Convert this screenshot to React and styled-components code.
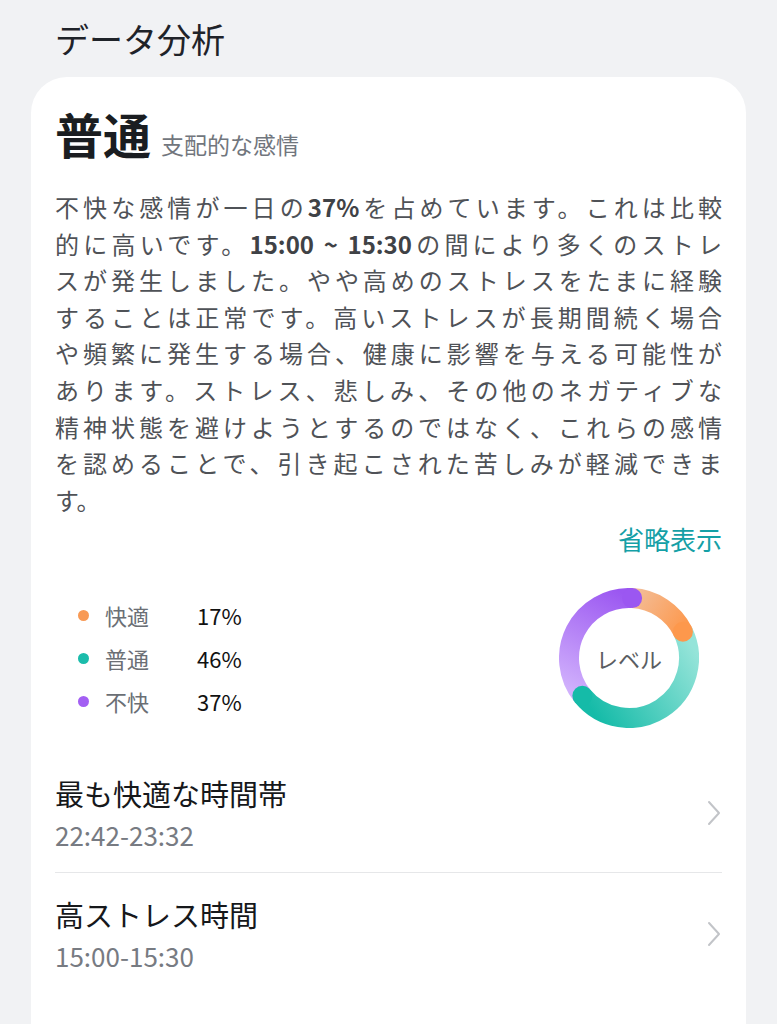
import React from "react";
import styled, { createGlobalStyle } from "styled-components";

const GlobalStyle = createGlobalStyle`
  * { box-sizing: border-box; }
  body {
    margin: 0;
    background: #f1f2f4;
    font-family: "Noto Sans CJK JP", "Noto Sans", sans-serif;
  }
`;

const lines = [
  <>不快な感情が一日の<b>37%</b>を占めています。これは比較</>,
  <>的に高いです。<b>15:00 ~ 15:30</b>の間により多くのストレ</>,
  <>スが発生しました。やや高めのストレスをたまに経験</>,
  <>することは正常です。高いストレスが長期間続く場合</>,
  <>や頻繁に発生する場合、健康に影響を与える可能性が</>,
  <>あります。ストレス、悲しみ、その他のネガティブな</>,
  <>精神状態を避けようとするのではなく、これらの感情</>,
  <>を認めることで、引き起こされた苦しみが軽減できま</>,
  <>す。</>,
];

const legend = [
  { label: "快適", value: "17%", color: "#f89a55" },
  { label: "普通", value: "46%", color: "#1bbcab" },
  { label: "不快", value: "37%", color: "#a35ff3" },
];

const segments = [
  { id: "o", from: 3, to: 64, light: "#f3bd97", dark: "#fd984c" },
  { id: "t", from: 64, to: 231, light: "#95e4d9", dark: "#15bba8" },
  { id: "p", from: 231, to: 363, light: "#d0b0fc", dark: "#9b57f1" },
];

const SIZE = 140;
const R = 60;
const C = SIZE / 2;

const pt = (deg) => {
  const a = (deg * Math.PI) / 180;
  return [C + R * Math.sin(a), C - R * Math.cos(a)];
};

const Donut = () => (
  <DonutBox>
    <svg width={SIZE} height={SIZE} viewBox={`0 0 ${SIZE} ${SIZE}`}>
      <defs>
        {segments.map((s) => {
          const [x1, y1] = pt(s.from);
          const [x2, y2] = pt(s.to);
          return (
            <linearGradient
              key={s.id}
              id={`g-${s.id}`}
              gradientUnits="userSpaceOnUse"
              x1={x1}
              y1={y1}
              x2={x2}
              y2={y2}
            >
              <stop offset="0" stopColor={s.light} />
              <stop offset="1" stopColor={s.dark} />
            </linearGradient>
          );
        })}
      </defs>
      {segments.map((s) => {
        const [x1, y1] = pt(s.from);
        const [x2, y2] = pt(s.to);
        const large = s.to - s.from > 180 ? 1 : 0;
        return (
          <path
            key={s.id}
            d={`M ${x1} ${y1} A ${R} ${R} 0 ${large} 1 ${x2} ${y2}`}
            fill="none"
            stroke={`url(#g-${s.id})`}
            strokeWidth="20"
          />
        );
      })}
      {segments.map((s) => {
        const [x2, y2] = pt(s.to);
        return <circle key={s.id} cx={x2} cy={y2} r="10" fill={s.dark} />;
      })}
    </svg>
    <DonutLabel>レベル</DonutLabel>
  </DonutBox>
);

const Chevron = () => (
  <svg width="16" height="28" viewBox="0 0 16 28">
    <path
      d="M3 3 L13 14 L3 25"
      fill="none"
      stroke="#c2c4c8"
      strokeWidth="2"
      strokeLinecap="round"
      strokeLinejoin="round"
    />
  </svg>
);

export default function App() {
  return (
    <>
      <GlobalStyle />
      <Page>
        <Heading>データ分析</Heading>
        <Card>
          <TitleRow>
            <Mood>普通</Mood>
            <MoodCaption>支配的な感情</MoodCaption>
          </TitleRow>
          <Paragraph>
            {lines.map((l, i) => (
              <Line key={i} $last={i === lines.length - 1}>
                {l}
              </Line>
            ))}
          </Paragraph>
          <Collapse>省略表示</Collapse>
          <Stats>
            <Legend>
              {legend.map((it) => (
                <LegendItem key={it.label}>
                  <Dot $color={it.color} />
                  <LegendLabel>{it.label}</LegendLabel>
                  <LegendValue>{it.value}</LegendValue>
                </LegendItem>
              ))}
            </Legend>
            <Donut />
          </Stats>
          <Rows>
            <Row>
              <RowText>
                <RowTitle>最も快適な時間帯</RowTitle>
                <RowValue>22:42-23:32</RowValue>
              </RowText>
              <Chevron />
            </Row>
            <Row>
              <RowText>
                <RowTitle>高ストレス時間</RowTitle>
                <RowValue>15:00-15:30</RowValue>
              </RowText>
              <Chevron />
            </Row>
          </Rows>
        </Card>
      </Page>
    </>
  );
}

const Page = styled.main`
  min-height: 1024px;
  padding: 0 31px;
  display: flex;
  flex-direction: column;
`;

const Heading = styled.h1`
  margin: 0;
  padding: 16px 24px 0;
  font-size: 34px;
  line-height: 46px;
  font-weight: 400;
  color: #1f2329;
`;

const Card = styled.section`
  flex: 1;
  margin-top: 15px;
  background: #fff;
  border-radius: 36px 36px 0 0;
  padding: 26px 24px 40px;
`;

const TitleRow = styled.div`
  display: flex;
  align-items: baseline;
`;

const Mood = styled.span`
  font-size: 48px;
  line-height: 60px;
  font-weight: 700;
  color: #1a1d21;
`;

const MoodCaption = styled.span`
  margin-left: 10px;
  font-size: 23px;
  color: #71767d;
`;

const Paragraph = styled.div`
  margin-top: 26px;
  font-size: 24px;
  line-height: 36.6px;
  color: #4f5257;

  b {
    font-weight: 700;
    color: #3f4246;
  }
`;

const Line = styled.div`
  text-align: justify;
  text-align-last: ${(p) => (p.$last ? "left" : "justify")};
  white-space: nowrap;
`;

const Collapse = styled.div`
  margin-top: 2px;
  text-align: right;
  font-size: 26px;
  line-height: 38px;
  color: #14a0a6;
`;

const Stats = styled.div`
  margin-top: 30px;
  display: flex;
  align-items: center;
  justify-content: space-between;
  padding: 0 23px;
`;

const Legend = styled.ul`
  margin: 0;
  padding: 0;
  list-style: none;
  display: flex;
  flex-direction: column;
  gap: 12px;
`;

const LegendItem = styled.li`
  display: flex;
  align-items: center;
  height: 31px;
`;

const Dot = styled.span`
  width: 11px;
  height: 11px;
  border-radius: 50%;
  background: ${(p) => p.$color};
`;

const LegendLabel = styled.span`
  margin-left: 16px;
  width: 92px;
  font-size: 22px;
  color: #6b6f75;
`;

const LegendValue = styled.span`
  font-size: 22px;
  color: #111;
`;

const DonutBox = styled.div`
  position: relative;
  width: ${SIZE}px;
  height: ${SIZE}px;

  svg {
    display: block;
  }
`;

const DonutLabel = styled.span`
  position: absolute;
  inset: 0;
  display: flex;
  align-items: center;
  justify-content: center;
  font-size: 22px;
  color: #5a5d62;
`;

const Rows = styled.div`
  margin-top: 24px;
`;

const Row = styled.div`
  display: flex;
  align-items: center;
  justify-content: space-between;
  padding: 22px 0 20px;

  & + & {
    border-top: 1px solid #e6e7e9;
  }
`;

const RowText = styled.div`
  display: flex;
  flex-direction: column;
`;

const RowTitle = styled.span`
  font-size: 29px;
  line-height: 38px;
  color: #16181b;
`;

const RowValue = styled.span`
  margin-top: 6px;
  font-size: 26px;
  line-height: 34px;
  color: #777b82;
`;
